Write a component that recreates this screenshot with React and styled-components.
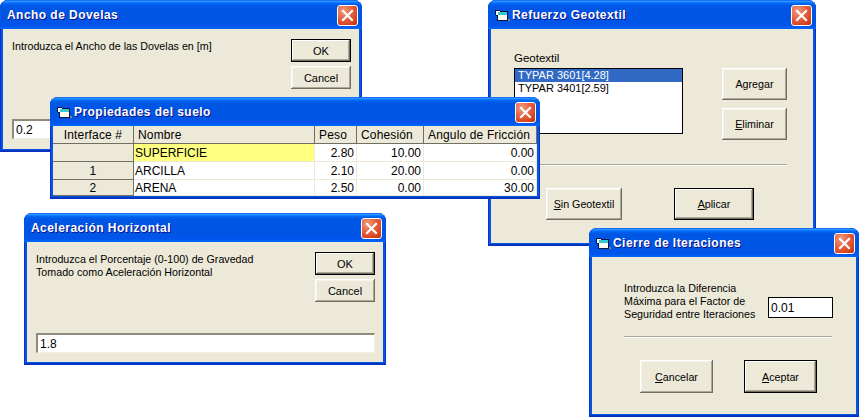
import styled, { createGlobalStyle } from 'styled-components'

const Global = createGlobalStyle`
    html, body {
        margin: 0;
        padding: 0;
        background: #fff;
    }
    body {
        width: 862px;
        height: 417px;
        overflow: hidden;
        font-family: "Liberation Sans", Arial, sans-serif;
        font-size: 11px;
        color: #000;
    }
`;

const Desktop = styled.div`
    position: relative;
    width: 862px;
    height: 417px;
    overflow: hidden;
`;

const Frame = styled.section`
    position: absolute;
    left: ${p => p.$x}px;
    top: ${p => p.$y}px;
    width: ${p => p.$w}px;
    height: ${p => p.$h}px;
    box-sizing: border-box;
    display: flex;
    flex-direction: column;
    background: #0855dd;
    border-radius: 8px 8px 0 0;
    padding: 0 3px 3px;
    box-shadow: inset 1px 0 #0831d9, inset -1px 0 #0831d9, inset 0 -2px #0335c0;
`;

const TitleBar = styled.header`
    display: flex;
    align-items: center;
    flex: none;
    height: 29px;
    box-sizing: border-box;
    margin: 0 -3px;
    padding: 1px 4px 0 7px;
    border-radius: 8px 8px 0 0;
    background: linear-gradient(to bottom, #0058ee 0%, #3593ff 4%, #288eff 6%, #127dff 8%, #036ffc 10%, #0262ee 14%, #0057e5 20%, #0054e3 60%, #0055eb 90%, #005bf5 94%, #026afe 97%, #0062ef 100%);
`;

const TitleIcon = styled.svg`
    flex: none;
    width: 16px;
    height: 16px;
    margin-right: 1px;
`;

const TitleText = styled.h1`
    flex: 1;
    margin: 0;
    font-family: "Liberation Sans", Arial, sans-serif;
    font-size: 12px;
    font-weight: 700;
    letter-spacing: 0.45px;
    color: #fff;
    text-shadow: 1px 1px #0f1089;
    white-space: nowrap;
`;

const CloseBox = styled.div`
    flex: none;
    width: 21px;
    height: 21px;
    box-sizing: border-box;
    display: flex;
    align-items: center;
    justify-content: center;
    border: 1px solid #fff;
    border-radius: 3px;
    background: radial-gradient(circle at 30% 25%, #f09a7c 0%, #e5603f 45%, #d23f1b 80%, #b5310f 100%);
`;

const DialogBody = styled.div`
    flex: 1;
    min-height: 0;
    background: #ece9d8;
    display: flex;
    flex-direction: column;
    box-sizing: border-box;
    padding: ${p => p.$pad || '0'};
`;

const TopRow = styled.div`
    display: flex;
    justify-content: space-between;
    align-items: flex-start;
`;

const Message = styled.p`
    margin: 1px 0 0;
    font-size: 10.7px;
    line-height: 13px;
`;

const ButtonStack = styled.div`
    display: flex;
    flex-direction: column;
    gap: 4px;
`;

const Btn = styled.button`
    width: ${p => p.$w || 60}px;
    height: ${p => p.$h || 23}px;
    box-sizing: border-box;
    padding: 0;
    font-family: "Liberation Sans", Arial, sans-serif;
    font-size: ${p => p.$fs || 11}px;
    color: #000;
    background: #ece9d8;
    border-style: solid;
    border-width: ${p => (p.$default ? '1px' : '0')};
    border-color: #000;
    box-shadow: ${p => (p.$default
        ? 'inset -1px -1px #716f64, inset 1px 1px #fff, inset -2px -2px #aca899'
        : 'inset -1px -1px #716f64, inset 1px 1px #fff, inset -2px -2px #aca899, inset 2px 2px #f5f3ea')};
`;

const Field = styled.div`
    box-sizing: border-box;
    display: flex;
    align-items: center;
    height: ${p => p.$h || 20}px;
    width: ${p => (p.$w ? p.$w + 'px' : 'auto')};
    margin-top: ${p => (p.$push ? 'auto' : (p.$top || 0) + 'px')};
    background: #fff;
    padding-left: 2px;
    font-size: 12px;
    border-style: solid;
    border-width: ${p => (p.$flat ? '1px' : '2px 1px 1px 2px')};
    border-color: ${p => (p.$flat ? '#000' : '#8d8a7b #f1efe2 #f1efe2 #8d8a7b')};
`;

const Table = styled.div`
    flex: 1;
    background: #fff;
    display: grid;
    grid-template-columns: 81px 181px 42px 67px 1fr;
    grid-template-rows: 18px 18px 18px 16px;
`;

const HeadCell = styled.div`
    background: #ece9d8;
    border-right: 1px solid #716f64;
    border-bottom: 1px solid #716f64;
    display: flex;
    align-items: center;
    justify-content: ${p => (p.$center ? 'center' : 'flex-start')};
    padding-left: ${p => (p.$center ? 0 : 4)}px;
    font-size: 12px;
    letter-spacing: 0.15px;
    white-space: nowrap;
`;

const RowHead = styled(HeadCell)`
    justify-content: center;
    padding-left: 0;
`;

const Cell = styled.div`
    box-sizing: border-box;
    display: flex;
    align-items: center;
    justify-content: ${p => (p.$num ? 'flex-end' : 'flex-start')};
    padding: 0 2px 0 1px;
    background: ${p => (p.$hi ? '#ffff80' : '#fff')};
    border-right: 1px solid #ece9d8;
    border-bottom: 1px solid #ece9d8;
    font-size: 12px;
    white-space: nowrap;
`;

const ListBox = styled.ul`
    box-sizing: border-box;
    width: 169px;
    height: 66px;
    margin: 0;
    padding: 0;
    list-style: none;
    background: #fff;
    border: 1px solid #000;
    font-size: 11px;
`;

const ListItem = styled.li`
    box-sizing: border-box;
    height: 13px;
    line-height: 13px;
    padding-left: 3px;
    white-space: nowrap;
    color: ${p => (p.$sel ? '#fff' : '#000')};
    background: ${p => (p.$sel ? '#316ac5' : 'transparent')};
`;

const Label = styled.div`
    font-size: 11.5px;
    line-height: 13px;
    margin-bottom: 3px;
`;

const GeoTop = styled.div`
    display: flex;
    justify-content: space-between;
`;

const GeoButtons = styled.div`
    display: flex;
    flex-direction: column;
    gap: 8px;
    padding-top: 16px;
`;

const Rule = styled.hr`
    width: ${p => p.$w}px;
    margin: ${p => p.$top}px 0 0;
    border: 0;
    height: 2px;
    background: linear-gradient(to bottom, #aca899 50%, #fff 50%);
`;

const Actions = styled.div`
    display: flex;
    gap: ${p => p.$gap}px;
    padding: ${p => p.$top}px 0 0 ${p => p.$left}px;
`;

const PromptRow = styled.div`
    display: flex;
    align-items: flex-start;
    justify-content: space-between;
    width: 209px;
`;

const AppIcon = () => (
    <TitleIcon viewBox="0 0 16 16" shapeRendering="crispEdges">
        <path d="M0 3h5v1h8v10H2V9H1V8H0z" fill="#0a1440" />
        <rect x="1" y="4" width="4" height="4" fill="#fff" />
        <rect x="3" y="5" width="9" height="3" fill="#38c8d0" />
        <rect x="3" y="8" width="9" height="5" fill="#fbfbf2" />
        <rect x="13" y="12" width="2" height="2" fill="#8a8474" />
    </TitleIcon>
);

const CloseIcon = () => (
    <svg width="13" height="13" viewBox="0 0 13 13">
        <path d="M2 2l9 9M11 2l-9 9" stroke="#fff" strokeWidth="2.2" strokeLinecap="square" fill="none" />
    </svg>
);

const Window = ({ x, y, w, h, title, icon, children }) => (
    <Frame $x={x} $y={y} $w={w} $h={h}>
        <TitleBar>
            {icon && <AppIcon />}
            <TitleText>{title}</TitleText>
            <CloseBox><CloseIcon /></CloseBox>
        </TitleBar>
        {children}
    </Frame>
);

const soils = [
    { id: '', name: 'SUPERFICIE', peso: '2.80', coh: '10.00', ang: '0.00', hi: true },
    { id: '1', name: 'ARCILLA', peso: '2.10', coh: '20.00', ang: '0.00' },
    { id: '2', name: 'ARENA', peso: '2.50', coh: '0.00', ang: '30.00' },
];

const App = () => (
    <Desktop>
        <Global />

        <Window x={0} y={0} w={362} h={152} title="Ancho de Dovelas">
            <DialogBody $pad="10px 8px 10px 9px">
                <TopRow>
                    <Message>Introduzca el Ancho de las Dovelas en [m]</Message>
                    <ButtonStack>
                        <Btn $default>OK</Btn>
                        <Btn>Cancel</Btn>
                    </ButtonStack>
                </TopRow>
                <Field $push>0.2</Field>
            </DialogBody>
        </Window>

        <Window x={488} y={0} w={328} h={246} title="Refuerzo Geotextil" icon>
            <DialogBody $pad="23px 26px 0 23px">
                <GeoTop>
                    <div>
                        <Label>Geotextil</Label>
                        <ListBox>
                            <ListItem $sel>TYPAR 3601[4.28]</ListItem>
                            <ListItem>TYPAR 3401[2.59]</ListItem>
                        </ListBox>
                    </div>
                    <GeoButtons>
                        <Btn $w={65} $h={32} $fs={10.7}>Agregar</Btn>
                        <Btn $w={65} $h={32} $fs={10.7}><u>E</u>liminar</Btn>
                    </GeoButtons>
                </GeoTop>
                <Rule $w={273} $top={24} />
                <Actions $gap={52} $left={32} $top={22}>
                    <Btn $w={76} $h={32} $fs={10.7}><u>S</u>in Geotextil</Btn>
                    <Btn $w={80} $h={32} $fs={10.7} $default><u>A</u>plicar</Btn>
                </Actions>
            </DialogBody>
        </Window>

        <Window x={50} y={97} w={490} h={102} title="Propiedades del suelo" icon>
            <Table>
                <HeadCell $center>Interface #</HeadCell>
                <HeadCell>Nombre</HeadCell>
                <HeadCell>Peso</HeadCell>
                <HeadCell>Cohesión</HeadCell>
                <HeadCell>Angulo de Fricción</HeadCell>
                {soils.map(s => [
                    <RowHead key={s.name + 'i'}>{s.id}</RowHead>,
                    <Cell key={s.name + 'n'} $hi={s.hi}>{s.name}</Cell>,
                    <Cell key={s.name + 'p'} $num>{s.peso}</Cell>,
                    <Cell key={s.name + 'c'} $num>{s.coh}</Cell>,
                    <Cell key={s.name + 'a'} $num>{s.ang}</Cell>,
                ])}
            </Table>
        </Window>

        <Window x={24} y={213} w={362} h={152} title="Aceleración Horizontal">
            <DialogBody $pad="10px 8px 9px 9px">
                <TopRow>
                    <Message>
                        Introduzca el Porcentaje (0-100) de Gravedad<br />
                        Tomado como Aceleración Horizontal
                    </Message>
                    <ButtonStack>
                        <Btn $default>OK</Btn>
                        <Btn>Cancel</Btn>
                    </ButtonStack>
                </TopRow>
                <Field $push>1.8</Field>
            </DialogBody>
        </Window>

        <Window x={589} y={228} w={270} h={189} title="Cierre de Iteraciones" icon>
            <DialogBody $pad="24px 0 0 32px">
                <PromptRow>
                    <Message>
                        Introduzca la Diferencia<br />
                        Máxima para el Factor de<br />
                        Seguridad entre Iteraciones
                    </Message>
                    <Field $flat $w={65} $h={21} $top={16}>0.01</Field>
                </PromptRow>
                <Rule $w={208} $top={15} />
                <Actions $gap={31} $left={16} $top={22}>
                    <Btn $w={73} $h={33} $fs={10.7}><u>C</u>ancelar</Btn>
                    <Btn $w={73} $h={33} $fs={10.7} $default><u>A</u>ceptar</Btn>
                </Actions>
            </DialogBody>
        </Window>
    </Desktop>
)

export default App
